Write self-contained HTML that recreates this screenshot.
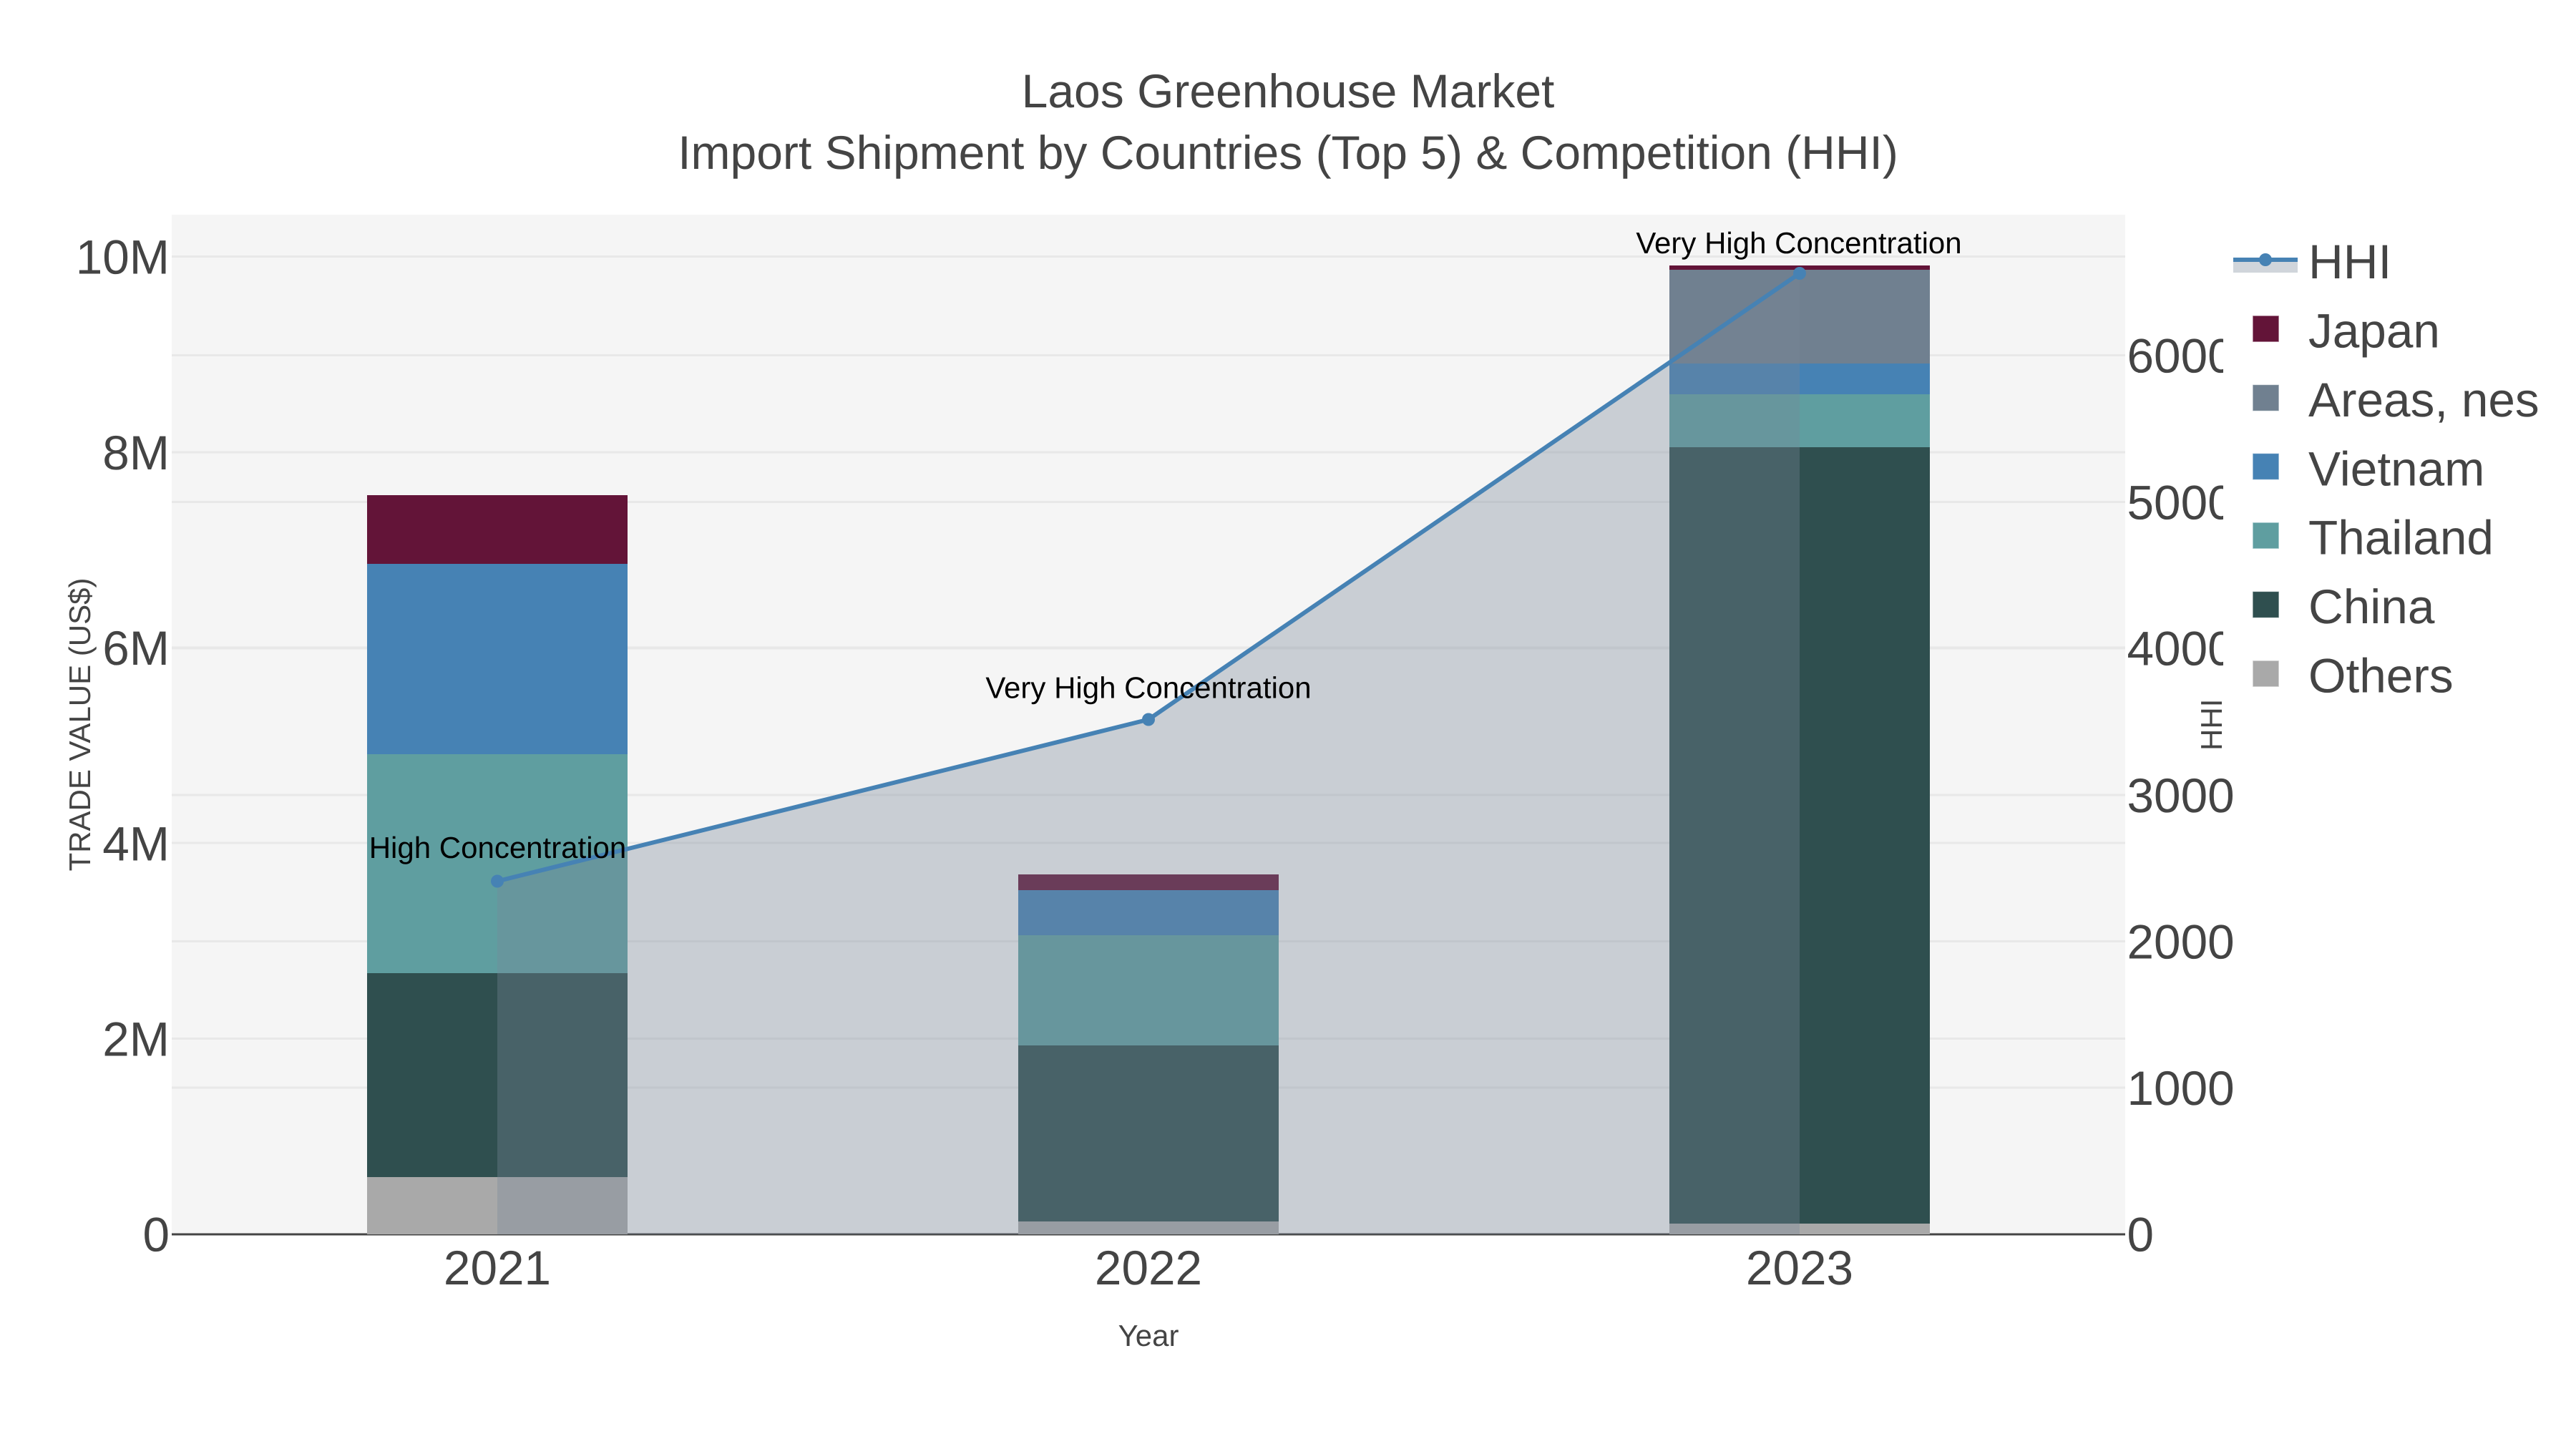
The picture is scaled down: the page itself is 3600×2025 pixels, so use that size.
<!DOCTYPE html>
<html><head><meta charset="utf-8"><title>Laos Greenhouse Market</title>
<style>
html,body{margin:0;padding:0;background:#fff;width:3600px;height:2025px;overflow:hidden}
svg{display:block}
text{font-family:"Liberation Sans",Arial,sans-serif;fill:#444;text-rendering:geometricPrecision}
.t{font-size:67.5px}
.a{font-size:42px}
.n{font-size:42px;fill:#000;text-anchor:middle}
.g line{stroke:#e8e8e8;stroke-width:3}
</style></head><body>
<svg xmlns="http://www.w3.org/2000/svg" width="3600" height="2025" viewBox="0 0 3600 2025">
<rect width="3600" height="2025" fill="#fff"/>
<rect x="240" y="300" width="2730" height="1425" fill="#f5f5f5"/>
<g class="g">
<line x1="240" x2="2970" y1="1520" y2="1520"/><line x1="240" x2="2970" y1="1315.5" y2="1315.5"/><line x1="240" x2="2970" y1="1111" y2="1111"/><line x1="240" x2="2970" y1="906" y2="906"/><line x1="240" x2="2970" y1="701.5" y2="701.5"/><line x1="240" x2="2970" y1="496.5" y2="496.5"/>
<line x1="240" x2="2970" y1="1451.5" y2="1451.5"/><line x1="240" x2="2970" y1="1178" y2="1178"/><line x1="240" x2="2970" y1="905" y2="905"/><line x1="240" x2="2970" y1="632" y2="632"/><line x1="240" x2="2970" y1="358.5" y2="358.5"/>
</g>
<line x1="240" x2="2970" y1="1725" y2="1725" stroke="#444" stroke-width="3"/>
<!-- bars 2021 -->
<rect x="513" y="692" width="364" height="96" fill="#631438"/>
<rect x="513" y="788" width="364" height="266" fill="#4682b4"/>
<rect x="513" y="1054" width="364" height="306" fill="#5f9ea0"/>
<rect x="513" y="1360" width="364" height="285" fill="#2f4f4f"/>
<rect x="513" y="1645" width="364" height="80" fill="#a9a9a9"/>
<!-- bars 2022 -->
<rect x="1423" y="1222" width="364" height="22" fill="#631438"/>
<rect x="1423" y="1244" width="364" height="63" fill="#4682b4"/>
<rect x="1423" y="1307" width="364" height="154" fill="#5f9ea0"/>
<rect x="1423" y="1461" width="364" height="246" fill="#2f4f4f"/>
<rect x="1423" y="1707" width="364" height="18" fill="#a9a9a9"/>
<!-- bars 2023 -->
<rect x="2333" y="371" width="364" height="6" fill="#631438"/>
<rect x="2333" y="377" width="364" height="131" fill="#708090"/>
<rect x="2333" y="508" width="364" height="43" fill="#4682b4"/>
<rect x="2333" y="551" width="364" height="74" fill="#5f9ea0"/>
<rect x="2333" y="625" width="364" height="1085" fill="#2f4f4f"/>
<rect x="2333" y="1710" width="364" height="15" fill="#a9a9a9"/>
<!-- HHI fill and line -->
<polygon points="695,1231.5 1605,1005.5 2515,382 2515,1725 695,1725" fill="#778899" fill-opacity="0.35"/>
<polyline points="695,1231.5 1605,1005.5 2515,382" fill="none" stroke="#4682b4" stroke-width="6" stroke-linejoin="round"/>
<circle cx="695" cy="1231.5" r="9" fill="#4682b4"/><circle cx="1605" cy="1005.5" r="9" fill="#4682b4"/><circle cx="2515" cy="382" r="9" fill="#4682b4"/>
<text class="n" x="695.5" y="1199">High Concentration</text>
<text class="n" x="1605" y="975.5">Very High Concentration</text>
<text class="n" x="2514" y="354">Very High Concentration</text>
<!-- left ticks -->
<g class="t" text-anchor="end">
<text x="237" y="1748.5">0</text><text x="237" y="1475.5">2M</text><text x="237" y="1202.3">4M</text><text x="237" y="929">6M</text><text x="237" y="656">8M</text><text x="237" y="382.5">10M</text>
</g>
<!-- right ticks -->
<g class="t">
<text x="2972.5" y="1748.5">0</text><text x="2972.5" y="1544">1000</text><text x="2972.5" y="1339.5">2000</text><text x="2972.5" y="1135">3000</text><text x="2972.5" y="929.5">4000</text><text x="2972.5" y="725.5">5000</text><text x="2972.5" y="520.5">6000</text>
</g>
<!-- x ticks -->
<g class="t" text-anchor="middle">
<text x="695" y="1795">2021</text><text x="1605" y="1795">2022</text><text x="2515" y="1795">2023</text>
</g>
<text class="a" text-anchor="middle" x="1605" y="1881">Year</text>
<text class="a" text-anchor="middle" transform="translate(126 1012.5) rotate(-90)">TRADE VALUE (US$)</text>
<text class="a" text-anchor="middle" transform="translate(3105 1012.8) rotate(-90)">HHI</text>
<!-- title -->
<g style="font-size:66px" text-anchor="middle">
<text x="1800" y="150">Laos Greenhouse Market</text>
<text x="1800" y="236">Import Shipment by Countries (Top 5) &amp; Competition (HHI)</text>
</g>
<!-- legend -->
<rect x="3107" y="312" width="493" height="680" fill="#fff"/>
<rect x="3121" y="363" width="90" height="18" fill="#778899" fill-opacity="0.35"/>
<line x1="3121" x2="3211" y1="363" y2="363" stroke="#4682b4" stroke-width="6"/>
<circle cx="3166" cy="363" r="9" fill="#4682b4"/>
<g stroke-width="1" stroke-opacity="0.5">
<rect x="3148.5" y="441.5" width="36" height="36" fill="#631438" stroke="#a06a85"/>
<rect x="3148.5" y="538" width="36" height="36" fill="#708090" stroke="#a0adb8"/>
<rect x="3148.5" y="634" width="36" height="36" fill="#4682b4" stroke="#8ab0d0"/>
<rect x="3148.5" y="730.5" width="36" height="36" fill="#5f9ea0" stroke="#9cc5c7"/>
<rect x="3148.5" y="827" width="36" height="36" fill="#2f4f4f" stroke="#6e8585"/>
<rect x="3148.5" y="923.5" width="36" height="36" fill="#a9a9a9" stroke="#cfcfcf"/>
</g>
<g class="t">
<text x="3226" y="389">HHI</text><text x="3226" y="485.5">Japan</text><text x="3226" y="582">Areas, nes</text><text x="3226" y="678.5">Vietnam</text><text x="3226" y="774.5">Thailand</text><text x="3226" y="871">China</text><text x="3226" y="967.5">Others</text>
</g>
</svg>
</body></html>
